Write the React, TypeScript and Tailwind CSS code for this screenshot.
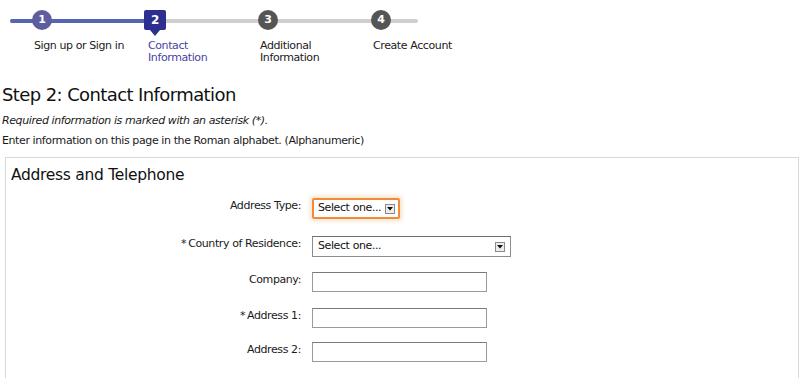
import React from 'react';

const steps = [
  { num: '1', label: ['Sign up or Sign in'], state: 'done' },
  { num: '2', label: ['Contact', 'Information'], state: 'current' },
  { num: '3', label: ['Additional', 'Information'], state: 'todo' },
  { num: '4', label: ['Create Account'], state: 'todo' },
];

function Caret() {
  return (
    <span className="flex h-[10px] w-[10px] items-center justify-center border border-[#8a8a8a] bg-[#ececec]">
      <svg width="6" height="4" viewBox="0 0 6 4">
        <path d="M0 0h6L3 3.5z" fill="#111" />
      </svg>
    </span>
  );
}

function FakeSelect({ width, focused }: { width: string; focused?: boolean }) {
  return (
    <div
      className={
        focused
          ? 'flex h-[21px] items-center justify-between rounded-[2px] border-2 border-[#f38a3a] bg-white pl-[4px] pr-[3px] shadow-[0_0_4px_2px_rgba(235,215,180,0.7)] ' + width
          : 'flex h-[21px] items-center justify-between border border-[#8c8c8c] border-t-[#6e6e6e] bg-white pl-[5px] pr-[5px] ' + width
      }
    >
      <span className="text-[11px] tracking-[-0.4px] text-[#111]">Select one...</span>
      <Caret />
    </div>
  );
}

function TextBox() {
  return <div className="h-[20px] w-[175px] border border-[#9a9a9a] border-t-[#7a7a7a] bg-white" />;
}

const rows: { label: string; control: React.ReactNode; mt: string; req?: boolean }[] = [
  { label: 'Address Type:', control: <FakeSelect width="w-[88px]" focused />, mt: 'mt-0' },
  { label: 'Country of Residence:', req: true, control: <FakeSelect width="w-[199px]" />, mt: 'mt-[17px]' },
  { label: 'Company:', control: <TextBox />, mt: 'mt-[15px]' },
  { label: 'Address 1:', req: true, control: <TextBox />, mt: 'mt-[16px]' },
  { label: 'Address 2:', control: <TextBox />, mt: 'mt-[14px]' },
];

export default function App() {
  return (
    <div className="h-[378px] w-[800px] overflow-hidden bg-white font-['DejaVu_Sans',sans-serif] text-[11px] tracking-[-0.4px] text-[#1a1a1a]">
      {/* progress tracker */}
      <div className="relative h-[84px] pt-[10px]">
        <div className="absolute left-[10px] top-[19px] h-[4px] w-[408px] rounded-full bg-[#cfcfcf]" />
        <div className="absolute left-[10px] top-[19px] h-[4px] w-[140px] rounded-full bg-[#5566b0]" />
        <div className="relative flex pl-[32px]">
          {steps.map((s) => (
            <div key={s.num} className="w-[113px] shrink-0">
              {s.state === 'current' ? (
                <div className="relative ml-[-1px] flex h-[20px] w-[22px] items-center justify-center rounded-[2px] bg-[#2c2f8f] text-[12px] font-bold text-white">
                  {s.num}
                  <span className="absolute top-[20px] left-[6px] h-0 w-0 border-x-[5px] border-t-[6px] border-x-transparent border-t-[#2c2f8f]" />
                </div>
              ) : (
                <div
                  className={
                    s.state === 'done'
                      ? 'flex h-[20px] w-[20px] items-center justify-center rounded-full bg-[#5e5e9e] text-[11px] font-bold text-white'
                      : 'flex h-[20px] w-[20px] items-center justify-center rounded-full bg-[#555555] text-[11px] font-bold text-white'
                  }
                >
                  {s.num}
                </div>
              )}
              <div
                className={
                  s.state === 'current'
                    ? 'mt-[10px] pl-[3px] leading-[12px] text-[#4a3fa6]'
                    : 'mt-[10px] pl-[2px] leading-[12px] text-[#1a1a1a]'
                }
              >
                {s.label.map((l) => (
                  <div key={l}>{l}</div>
                ))}
              </div>
            </div>
          ))}
        </div>
      </div>

      {/* heading */}
      <h1 className="pl-[2px] text-[18px] leading-[22px] tracking-[-0.6px] text-[#111]">Step 2: Contact Information</h1>
      <p className="mt-[8px] pl-[2px] leading-[14px] italic">Required information is marked with an asterisk (*).</p>
      <p className="mt-[6px] pl-[2px] leading-[14px]">Enter information on this page in the Roman alphabet. (Alphanumeric)</p>

      {/* panel */}
      <div className="ml-[5px] mt-[9px] h-[260px] w-[794px] border border-[#d9d9d9] bg-white">
        <h2 className="pl-[5px] pt-[8px] text-[15.5px] leading-[18px] tracking-[-0.3px] text-[#111]">Address and Telephone</h2>
        <div className="mt-[14px] flex flex-col">
          {rows.map((r) => (
            <div key={r.label} className={'flex items-start ' + r.mt}>
              <div className="w-[295px] shrink-0 pt-[1px] text-right leading-[14px]">
                {r.req && <span className="mr-[2px]">*</span>}
                {r.label}
              </div>
              <div className="ml-[11px]">{r.control}</div>
            </div>
          ))}
        </div>
      </div>
    </div>
  );
}
